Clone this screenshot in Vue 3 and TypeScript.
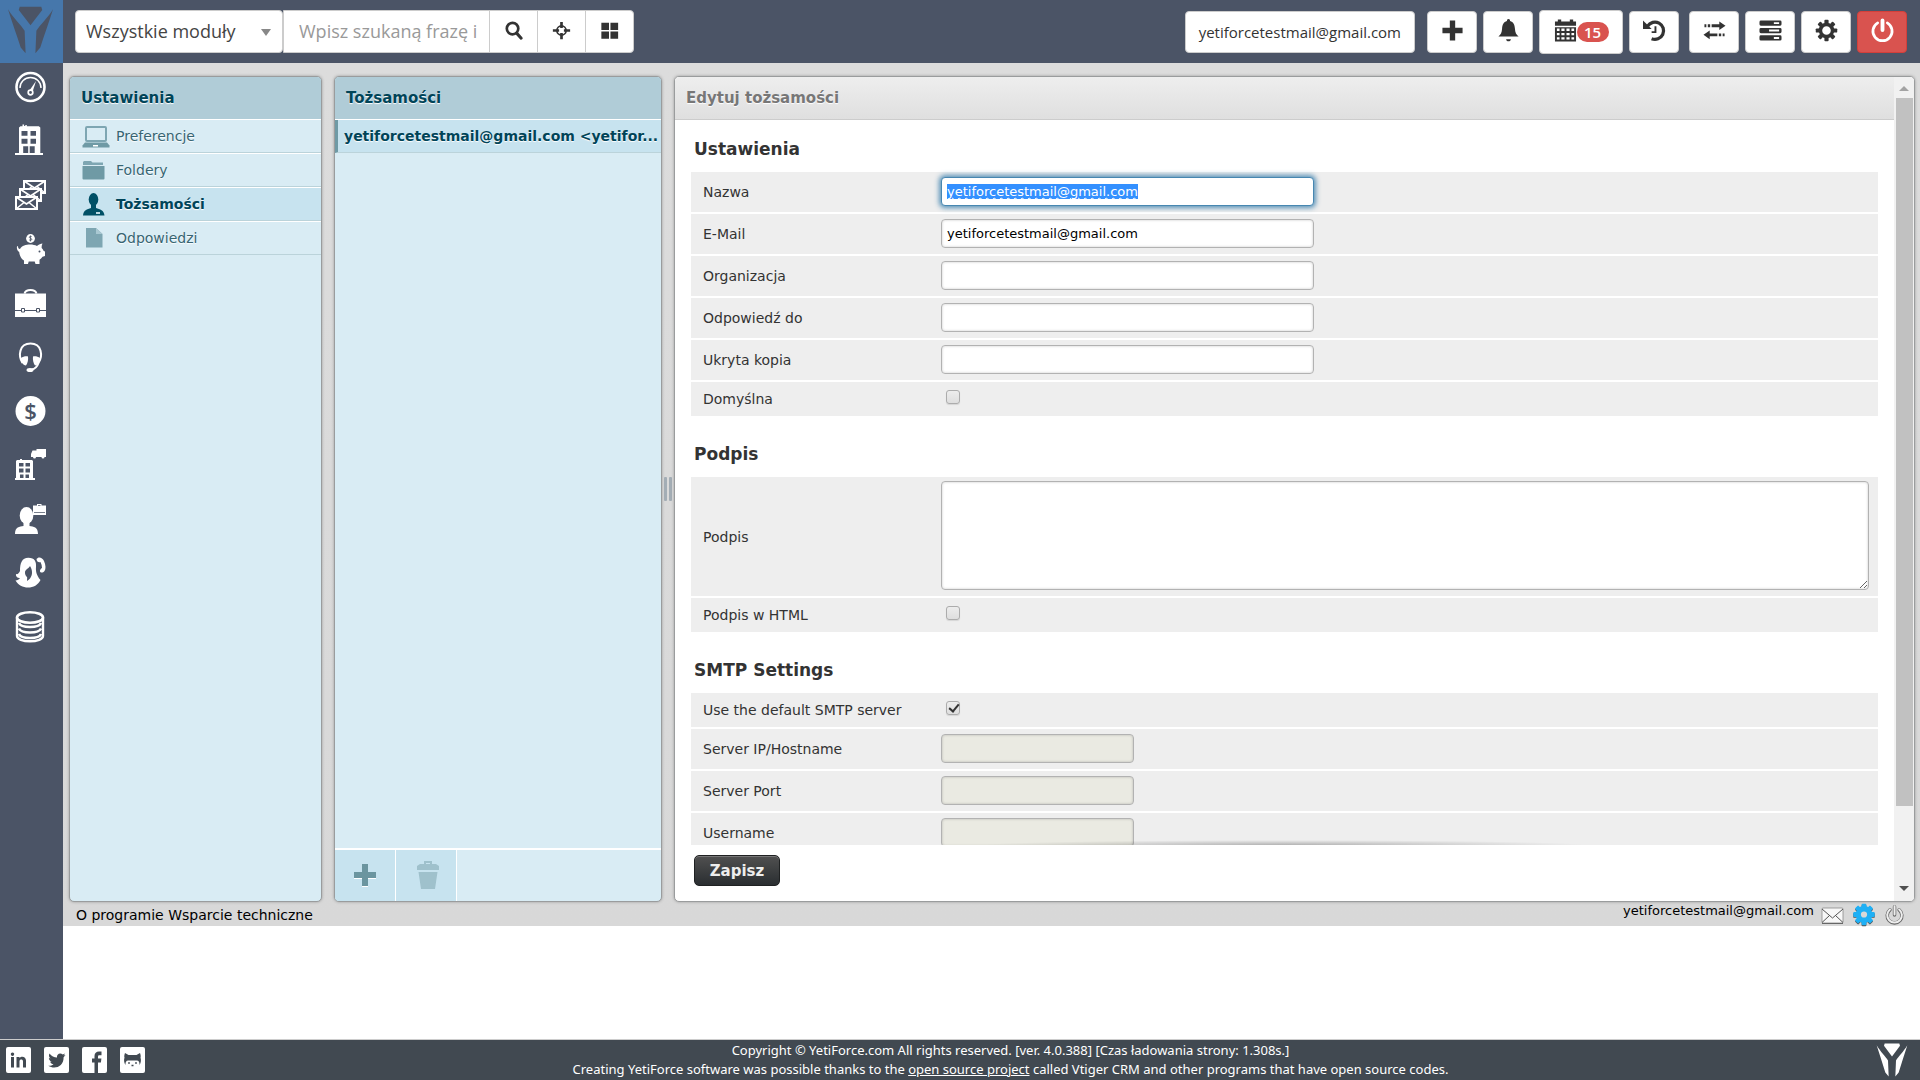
<script setup lang="ts">
import { nextTick, onMounted, ref } from 'vue'

interface Item {
  label: string
  icon: string
}

interface Field {
  id: string
  label: string
  kind: 'text' | 'checkbox' | 'textarea'
  value?: string
  checked?: boolean
  disabled?: boolean
}

interface Section {
  title: string
  fields: Field[]
}

const envelope = (x: number, y: number): string =>
  `<g transform="translate(${x} ${y})"><rect x="1" y="1" width="21" height="12" fill="#4b5466" stroke="#fff" stroke-width="2"/><path d="M1 1l10.500 7L22 1M1 13l8-6.500M22 13l-8-6.500" fill="none" stroke="#fff" stroke-width="1.600"/></g>`

const teeth = (count: number, x: number, y: number, w: number, h: number): string =>
  Array.from({ length: count }, (_, i) => `<rect x="${x}" y="${y}" width="${w}" height="${h}" rx="1" transform="rotate(${(i * 360) / count} 12 12)"/>`).join('')

const icons: Record<string, string> = {
  gauge:
    '<circle cx="15.500" cy="16" r="14" fill="none" stroke="#fff" stroke-width="2.600"/><path d="M5 17a10.500 10.500 0 0 1 21 0" fill="none" stroke="#fff" stroke-width="1.400"/><path d="M14.500 19.500L21 10l-3.500 11z"/><circle cx="15.500" cy="21.500" r="2.300" fill="#4b5466" stroke="#fff" stroke-width="1.700"/>',
  building:
    '<path fill-rule="evenodd" d="M4 2.500l1.500-1.300h2V-.5h1.600v1.500h1.200V0h1.500v1.200h12L25.300 2.500V28H28v2H0v-2h4zM6.500 6v4.700h6V6zm9 0v4.700h5.500V6zm-9 7.700v5h6v-5zm9 0v5h5.500v-5zm-7.300 7.600V28h5v-6.700zm6.500 0V28h5v-6.700z"/>',
  mails: envelope(8, 1) + envelope(4, 9) + envelope(0, 17),
  piggy:
    '<circle cx="15.500" cy="5.500" r="4.400"/><path d="M16.700 3.700c-.8-.7-2.400-.5-2.400.6 0 1.200 2.500.8 2.500 2 0 1.200-1.700 1.300-2.700.5M15.500 2.600v5.800" fill="none" stroke="#4b5466" stroke-width=".8"/><path d="M3 13c0 2 .5 3 2 3 2-3.500 6-4.500 10-4.500 3 0 5 .5 7 1.500 1.500-1.500 4-2.500 5.500-2.500-.8 1.500-1 3-.8 4.500 1 1 1.600 2 2 3l1.300.5v4.500l-2.500.8c-.8 1.300-2 2.300-3 3V31h-4l-.8-2.500h-6L13 31H9v-3.500C6.500 26 4.500 23 4.200 19 2.500 18 1.500 16 2 13.500z"/><circle cx="24.500" cy="18.500" r="1" fill="#4b5466"/>',
  briefcase:
    '<path d="M9.500 6.500C10.500 3.500 12 3 15.500 3s5 .5 6 3.500" fill="none" stroke="#fff" stroke-width="2"/><path d="M0 6.500h31V30H0z"/><path d="M0 23.500h31" stroke="#4b5466" stroke-width="1"/><path d="M6.500 21.500h3V25h-3zM21.500 21.500h3V25h-3z" fill="#fff" stroke="#4b5466" stroke-width="1"/>',
  headset:
    '<path d="M7.500 22C3 15 4 2.500 15.500 2.500S28 15 23.500 22c-1 3-3 6-7 6.500" fill="none" stroke="#fff" stroke-width="2"/><path d="M6 17c2-1.500 5-2 7-1.500.5 3-.5 7-2 9-3-.5-5.500-3.500-5-7.500zM25 17c-2-1.500-5-2-7-1.500-.5 3 .5 7 2 9 3-.5 5.500-3.500 5-7.500z"/><ellipse cx="15" cy="29" rx="3.500" ry="2"/>',
  dollar:
    '<circle cx="15.500" cy="16" r="15"/><text x="15.500" y="24" text-anchor="middle" font-family="Open Sans, sans-serif" font-weight="600" font-size="22" fill="#4b5466">$</text>',
  office:
    '<path fill-rule="evenodd" d="M1 12l1-1h3v-1h2v1h10l1 1v17h2v2H0v-2h1zM4 14v3.500h4.500V14zm6.500 0v3.500H15V14zM4 19.500v4h4.500v-4zm6.500 0v4H15v-4zM5 25.500V29h3.500v-3.500zm5.500 0V29H14v-3.500z"/><path d="M21.500 0H31v8h-1.500a1.500 1.500 0 0 1-3 0H21a1.500 1.500 0 0 1-3 0h-2V5l1.500-3.500h4z"/>',
  agent:
    '<ellipse cx="11.500" cy="12.500" rx="6.800" ry="8.500"/><path d="M8.500 19h6v4c4 .5 8.500 1 8.500 8H0c0-7 4.500-7.500 8.500-8z"/><path fill-rule="evenodd" d="M22 1h4.500v1.500h4.500V12H18V2.500h4zM23 2v.8h2.500V2zM19 9v.7h11V9z"/>',
  caller:
    '<path fill-rule="evenodd" d="M13.300.7C20 .7 21.500 5 21 10c-.3 3.500 0 8 4.500 13-2.500 5-7 7.500-12.500 7.500C8 30.500 3 28 .5 23.500c2 0 3.500-1 4.500-2.500-2.500 0-4.500-1.500-4-4 1.500.5 3-.5 4-3C5 6 7 .7 13.300.7zM15 9c-1 2.500-4.500 3-5 6-.2 2.500 1 4 2.200 5.500L12 24l2-1.500c3-2.500 4.500-8 1-13.500z"/><path d="M21.500 2c2-3 6-1.500 7.500 2 1.800 4 2 8 .5 10-1.500 2-4 2-4.500.5-.4-1.500 1-3 2-3.500 0-2-.5-4-1.500-6-1.500 1-4-.5-4-3z"/>',
  database:
    '<ellipse cx="15" cy="6.500" rx="13" ry="5.300" fill="none" stroke="#fff" stroke-width="2.600"/><path d="M2 6.500v18.500c0 3 6 5.300 13 5.300S28 28 28 25V6.500M4 12c1 2.500 6 4 11 4s10-1.500 11-4M4 17.500c1 2.500 6 4 11 4s10-1.500 11-4M4 23c1 2.500 6 4 11 4s10-1.500 11-4" fill="none" stroke="#fff" stroke-width="2.400"/>',
  search: '<circle cx="11" cy="10" r="6" fill="none" stroke="#333" stroke-width="2.800"/><path d="M15.500 15l4.500 5" stroke="#333" stroke-width="3.200" stroke-linecap="round"/>',
  target:
    '<circle cx="12" cy="12" r="4.800" fill="none" stroke="#333" stroke-width="1.800"/><path d="M12 3v6.500M12 14.500v6.500M3 12h6.500M14.500 12h6.500" stroke="#333" stroke-width="2.800"/>',
  grid: '<path d="M3.500 4h8v7.500h-8zM13 4h8v7.500h-8zM3.500 13h8v7.500h-8zM13 13h8v7.500h-8z"/>',
  plus: '<path d="M9.200 1.500h5.600v7.700h7.700v5.600h-7.700v7.700H9.200v-7.700H1.500V9.200h7.700z"/>',
  bell: '<path d="M12 0c1.200 0 1.700.8 1.600 2 3.500 1 4.900 4 5.100 8 .2 4.500 1.500 6.500 3.800 8.300H1.500C3.800 16.500 5.100 14.500 5.300 10c.2-4 1.600-7 5.100-8C10.300.8 10.800 0 12 0zM9.500 21h5c0 1.300-1 2.300-2.500 2.300S9.500 22.300 9.500 21z"/>',
  calendar:
    '<path d="M1 2.500h3V.5h3.500v2h9v-2H20v2h3V7H1z"/><path fill-rule="evenodd" d="M1 8.500h22v15H1zM3 10v2.500h2.800V10zm4.700 0v2.500h3.300V10zm5.300 0v2.500h3.300V10zm5.200 0v2.500H21V10zM3 14.500V17h2.800v-2.500zm4.700 0V17h3.300v-2.500zm5.300 0V17h3.300v-2.500zm5.200 0V17H21v-2.500zM3 19v2.500h2.800V19zm4.700 0v2.500h3.300V19zm5.300 0v2.500h3.300V19zm5.200 0v2.500H21V19z"/>',
  history:
    '<path d="M4.800 7.500A9 9 0 1 1 9 20.500" fill="none" stroke="#333" stroke-width="3.400"/><path d="M0 1.500V10.500h9z"/><path d="M13 7.500v6.200h-4" fill="none" stroke="#333" stroke-width="2"/>',
  transfer:
    '<path d="M9 5.500h8V2.500l6.500 4.500L17 11.500V8.500H9zM1.500 5.500h2v3h-2zM5 5.500h2.500v3H5zM15 15H7v-3L.5 16.500 7 21v-3h8zM16.500 15H19v3h-2.500zM20.500 15h2v3h-2z"/>',
  server:
    '<path fill-rule="evenodd" d="M2 1.500h20a1.500 1.500 0 0 1 1.500 1.500v2.500A1.500 1.500 0 0 1 22 7H2A1.500 1.500 0 0 1 .5 5.500V3A1.500 1.500 0 0 1 2 1.500zM15.500 3.300v2H21v-2zM2 9.300h20a1.500 1.500 0 0 1 1.500 1.500v2.500a1.500 1.500 0 0 1-1.500 1.500H2a1.500 1.500 0 0 1-1.500-1.500v-2.500A1.500 1.500 0 0 1 2 9.300zM10.500 11v2H21v-2zM2 17h20a1.500 1.500 0 0 1 1.500 1.500V21a1.500 1.500 0 0 1-1.500 1.500H2A1.500 1.500 0 0 1 .5 21v-2.500A1.500 1.500 0 0 1 2 17zM15.500 18.800v2H21v-2z"/>',
  gear: `<circle cx="12" cy="12" r="6.300" fill="none" stroke="#333" stroke-width="3.600"/>${teeth(8, 9.8, 0.8, 4.4, 4.4)}`,
  power:
    '<path d="M7 4a10 10 0 1 0 10 0" fill="none" stroke="#fff" stroke-width="2.800" stroke-linecap="round"/><path d="M12 1.500v10" stroke="#fff" stroke-width="4" stroke-linecap="round"/>',
  laptop:
    '<rect x="4" y="3" width="20" height="14" rx="1" fill="none" stroke="#7ea6b2" stroke-width="2"/><path d="M3 18.500h22l2.500 3v2H.5v-2z" fill="#6f9aa5"/><path d="M11 21h5v1.500h-5z" fill="#fff"/>',
  folder: '<path d="M2 3h7l1.500 1.500H21V7H1V4z" fill="#7ea6b2"/><path d="M.5 8h22v12.500a1 1 0 0 1-1 1h-20a1 1 0 0 1-1-1z" fill="#6f9aa5"/>',
  person: '<ellipse cx="11.500" cy="7.500" rx="4.800" ry="6.500" fill="#005066"/><path d="M9 12h5v4c4 1.500 8 2 8.500 7.500H1C1.500 18 5 17.500 9 16z" fill="#005066"/><path d="M14 20h4v2h-4z" fill="#b9d8e2"/>',
  page: '<path d="M4 2h10l6.500 6v13.500H4z" fill="#7ea6b2"/><path d="M14 2v6h6.500z" fill="#a9c8d2"/>',
  add: '<path d="M9 2h6v8h8v6h-8v8H9v-8H1v-6h8z" fill="#fff" transform="translate(0 1)"/><path d="M9 2h6v8h8v6h-8v8H9v-8H1v-6h8z" fill="#6b959f"/>',
  trash:
    '<g fill="#9fc1cc"><path d="M9 3V0h6v3" fill="none" stroke="#9fc1cc" stroke-width="2"/><path d="M1 4l3-2h16l3 2v4H1zM2.500 10h19L19 27H5z"/></g>',
  mailbox:
    '<rect x="1" y="2" width="21" height="15" rx="1" fill="#f7f7f7" stroke="#8a8a8a" stroke-width=".8"/><path d="M1 3l10.500 9L22 3M1 16.500l7.500-7M22 16.500l-7.500-7" fill="none" stroke="#555" stroke-width="1"/><path d="M1 17.500h21" stroke="#666" stroke-width="1"/>',
  blueGear: `<g fill="#555" transform="translate(0 1)">${teeth(8, 9.5, 0.8, 5, 5)}</g><g fill="#1fb0f5"><circle cx="12" cy="12" r="6" fill="none" stroke="#1fb0f5" stroke-width="5.500"/>${teeth(8, 9.5, 0.8, 5, 5)}</g>`,
  logout:
    '<g fill="none" stroke-linecap="round"><path d="M6.500 6.500a8 8 0 1 0 10 0M11.500 3v9" stroke="#666" stroke-width="3.800"/><path d="M6.500 6a8 8 0 1 0 10 0M11.500 2.500v9" stroke="#eee" stroke-width="2.200"/></g>',
  linkedin:
    '<path fill-rule="evenodd" d="M2 0h21a2 2 0 0 1 2 2v22a2 2 0 0 1-2 2H2a2 2 0 0 1-2-2V2a2 2 0 0 1 2-2zM5 10v10.500h3V10zM6.500 5.500a1.700 1.700 0 1 0 .01 0zM10.500 10v10.500h3V14c.5-2 3.500-2 3.500.5v6h3v-7c0-4-4.500-5-6.500-2.500V10z"/>',
  twitter:
    '<rect width="25" height="26" rx="2"/><path d="M21.500 8l-2 .6c.8-.5 1.300-1.200 1.500-2l-2.200.9c-2.500-2.500-6.500-.5-5.800 3-3 0-5.500-1.300-7.500-4-1 2-.5 3.800 1 5l-1.600-.5c0 1.800 1.200 3.200 2.900 3.700h-1.600c.5 1.400 1.700 2.300 3.300 2.500-1.500 1.200-3.300 1.700-5.200 1.500 6 4 15.500 1.300 15.300-8.500z" fill="#414951"/>',
  facebook: '<rect width="25" height="26" rx="2"/><path d="M12.500 26V15.500H10V11.500h2.500V9c0-3 1.800-4.500 4.500-4.500h2.500v3.800h-2c-1 0-1.500.4-1.500 1.400v1.800h3.400l-.5 4H16V26z" fill="#414951"/>',
  github:
    '<rect width="25" height="26" rx="2"/><path d="M5 6l3.500 2h8L20 6c.8 2 .9 3.500.5 4.500.8 2.500.5 5-1 7.500.2-3.500-1-5-3.500-4.500h-7C6.500 13 5.300 14.500 5.500 18c-1.500-2.500-1.800-5-1-7.500C4.100 9.500 4.200 8 5 6z" fill="#414951"/><path d="M9 15v2M16 15v2M11.500 18.500h2" stroke="#414951" stroke-width="1.300"/>',
}

const modules: Item[] = [
  { label: 'Pulpit', icon: 'gauge' },
  { label: 'Kontrahenci', icon: 'building' },
  { label: 'Poczta', icon: 'mails' },
  { label: 'Finanse', icon: 'piggy' },
  { label: 'Projekty', icon: 'briefcase' },
  { label: 'Wsparcie', icon: 'headset' },
  { label: 'Sprzedaż', icon: 'dollar' },
  { label: 'Dostawy', icon: 'office' },
  { label: 'Kadry', icon: 'agent' },
  { label: 'Kontakty', icon: 'caller' },
  { label: 'Baza danych', icon: 'database' },
]

const searchTools: Item[] = [
  { label: 'Szukaj', icon: 'search' },
  { label: 'Wyszukiwanie zaawansowane', icon: 'target' },
  { label: 'Moduły', icon: 'grid' },
]

const settings: Item[] = [
  { label: 'Preferencje', icon: 'laptop' },
  { label: 'Foldery', icon: 'folder' },
  { label: 'Tożsamości', icon: 'person' },
  { label: 'Odpowiedzi', icon: 'page' },
]

const socials: Item[] = [
  { label: 'LinkedIn', icon: 'linkedin' },
  { label: 'Twitter', icon: 'twitter' },
  { label: 'Facebook', icon: 'facebook' },
  { label: 'GitHub', icon: 'github' },
]

const account = 'yetiforcetestmail@gmail.com'
const identity = `${account} <yetifor...`

const sections = ref<Section[]>([
  {
    title: 'Ustawienia',
    fields: [
      { id: 'name', label: 'Nazwa', kind: 'text', value: account },
      { id: 'email', label: 'E-Mail', kind: 'text', value: account },
      { id: 'organization', label: 'Organizacja', kind: 'text', value: '' },
      { id: 'reply-to', label: 'Odpowiedź do', kind: 'text', value: '' },
      { id: 'bcc', label: 'Ukryta kopia', kind: 'text', value: '' },
      { id: 'standard', label: 'Domyślna', kind: 'checkbox', checked: false },
    ],
  },
  {
    title: 'Podpis',
    fields: [
      { id: 'signature', label: 'Podpis', kind: 'textarea', value: '' },
      { id: 'html-signature', label: 'Podpis w HTML', kind: 'checkbox', checked: false },
    ],
  },
  {
    title: 'SMTP Settings',
    fields: [
      { id: 'smtp-default', label: 'Use the default SMTP server', kind: 'checkbox', checked: true },
      { id: 'smtp-host', label: 'Server IP/Hostname', kind: 'text', value: '', disabled: true },
      { id: 'smtp-port', label: 'Server Port', kind: 'text', value: '', disabled: true },
      { id: 'smtp-user', label: 'Username', kind: 'text', value: '', disabled: true },
    ],
  },
])

onMounted(async () => {
  await nextTick()
  const input = document.getElementById('name') as HTMLInputElement | null
  input?.focus()
  input?.select()
})
</script>

<template>
  <div class="app">
    <header class="topbar">
      <a class="brand" href="#" aria-label="YetiForce">
        <svg viewBox="0 0 48 60" width="47" height="48" preserveAspectRatio="none">
          <path d="M13 1h22l1 4-12 19L12 5zM1 4c6 12 13 19 17 27l1 28-5-7C10 36 5 20 1 4zM47 4c-6 12-13 19-17 27l-1 28 5-7c4-16 9-32 13-48z" fill="#4b5466" />
        </svg>
      </a>
      <div class="search">
        <div class="module-select">
          <select aria-label="Moduł">
            <option>Wszystkie moduły</option>
          </select>
        </div>
        <div class="search-group">
          <input type="text" placeholder="Wpisz szukaną frazę i" aria-label="Szukana fraza" />
          <button v-for="tool in searchTools" :key="tool.icon" type="button" :aria-label="tool.label">
            <svg viewBox="0 0 24 24" width="23" height="23" fill="#333" v-html="icons[tool.icon]" />
          </button>
        </div>
      </div>
      <div class="actions">
        <button type="button" class="account">{{ account }}</button>
        <button type="button" class="tool" aria-label="Dodaj"><svg viewBox="0 0 24 24" v-html="icons.plus" /></button>
        <button type="button" class="tool" aria-label="Powiadomienia"><svg viewBox="0 0 24 24" v-html="icons.bell" /></button>
        <button type="button" class="tool wide" aria-label="Kalendarz">
          <svg viewBox="0 0 24 24" v-html="icons.calendar" /><span class="badge">15</span>
        </button>
        <button type="button" class="tool" aria-label="Historia"><svg viewBox="0 0 24 24" v-html="icons.history" /></button>
        <button type="button" class="tool spaced" aria-label="Przełącz"><svg viewBox="0 0 24 24" v-html="icons.transfer" /></button>
        <button type="button" class="tool" aria-label="Serwer"><svg viewBox="0 0 24 24" v-html="icons.server" /></button>
        <button type="button" class="tool" aria-label="Ustawienia"><svg viewBox="0 0 24 24" v-html="icons.gear" /></button>
        <button type="button" class="tool danger" aria-label="Wyloguj"><svg viewBox="0 0 24 24" v-html="icons.power" /></button>
      </div>
    </header>

    <div class="middle">
      <nav class="sidebar">
        <a v-for="entry in modules" :key="entry.icon" href="#" :aria-label="entry.label">
          <svg viewBox="0 0 32 32" width="32" height="32" fill="#fff" v-html="icons[entry.icon]" />
        </a>
      </nav>

      <main class="mail">
        <div class="panels">
          <section class="panel settings">
            <h2>Ustawienia</h2>
            <a
              v-for="entry in settings"
              :key="entry.icon"
              href="#"
              class="row"
              :class="{ selected: entry.label === 'Tożsamości' }"
            >
              <svg viewBox="0 0 28 25" width="28" height="25" v-html="icons[entry.icon]" />
              <span>{{ entry.label }}</span>
            </a>
          </section>

          <section class="panel identities">
            <h2>Tożsamości</h2>
            <a href="#" class="row selected identity">{{ identity }}</a>
            <div class="panel-tools">
              <button type="button" aria-label="Dodaj tożsamość"><svg viewBox="0 0 24 28" width="24" height="28" v-html="icons.add" /></button>
              <button type="button" aria-label="Usuń tożsamość" disabled><svg viewBox="0 -1 24 30" width="24" height="30" v-html="icons.trash" /></button>
            </div>
          </section>

          <div class="splitter"><i></i><i></i></div>

          <section class="panel editor">
            <div class="editor-main">
              <h2>Edytuj tożsamości</h2>
              <form class="form" @submit.prevent>
                <fieldset v-for="section in sections" :key="section.title">
                  <legend>{{ section.title }}</legend>
                  <div v-for="field in section.fields" :key="field.id" class="field" :class="field.kind">
                    <label :for="field.id">{{ field.label }}</label>
                    <textarea v-if="field.kind === 'textarea'" :id="field.id" v-model="field.value"></textarea>
                    <input v-else-if="field.kind === 'checkbox'" :id="field.id" v-model="field.checked" type="checkbox" />
                    <input v-else :id="field.id" v-model="field.value" type="text" :disabled="field.disabled" />
                  </div>
                </fieldset>
              </form>
              <div class="form-actions"><button type="submit">Zapisz</button></div>
            </div>
            <div class="scrollbar" aria-hidden="true">
              <span class="arrow up"></span>
              <span class="thumb"></span>
              <span class="arrow down"></span>
            </div>
          </section>
        </div>

        <div class="status">
          <div class="status-links"><a href="#">O programie</a> <a href="#">Wsparcie techniczne</a></div>
          <div class="status-user">
            <span>{{ account }}</span>
            <a href="#" aria-label="Poczta"><svg viewBox="0 0 24 20" width="24" height="20" v-html="icons.mailbox" /></a>
            <a href="#" aria-label="Ustawienia"><svg viewBox="0 0 24 24" width="24" height="23" v-html="icons.blueGear" /></a>
            <a href="#" aria-label="Wyloguj"><svg viewBox="0 0 24 24" width="24" height="22" v-html="icons.logout" /></a>
          </div>
        </div>
      </main>
    </div>

    <footer class="footer">
      <div class="socials">
        <a v-for="entry in socials" :key="entry.icon" href="#" :aria-label="entry.label">
          <svg viewBox="0 0 25 26" width="25" height="26" fill="#fff" v-html="icons[entry.icon]" />
        </a>
      </div>
      <div class="copyright">
        <p>Copyright © YetiForce.com All rights reserved. [ver. 4.0.388] [Czas ładowania strony: 1.308s.]</p>
        <p>
          Creating YetiForce software was possible thanks to the <a href="#">open source project</a> called Vtiger CRM and other
          programs that have open source codes.
        </p>
      </div>
      <a class="footer-logo" href="#" aria-label="YetiForce">
        <svg viewBox="0 0 48 60" width="32" height="34" preserveAspectRatio="none">
          <path d="M13 1h22l1 4-12 19L12 5zM1 4c6 12 13 19 17 27l1 28-5-7C10 36 5 20 1 4zM47 4c-6 12-13 19-17 27l-1 28 5-7c4-16 9-32 13-48z" fill="#fff" />
        </svg>
      </a>
    </footer>
  </div>
</template>

<style>
body {
  margin: 0;
  background: #fff;
}
</style>

<style scoped>
.app,
.app * {
  box-sizing: border-box;
}

.app {
  display: flex;
  flex-direction: column;
  height: 100vh;
  overflow: hidden;
  font-family: 'Open Sans', sans-serif;
  color: #333;
}

button,
input,
select,
textarea {
  font: inherit;
  margin: 0;
}

svg {
  display: block;
  flex: none;
  overflow: visible;
}

h2,
p {
  margin: 0;
}

/* top bar */
.topbar {
  display: flex;
  align-items: center;
  flex: none;
  height: 63px;
  background: #4b5466;
}

.brand {
  display: flex;
  align-items: center;
  justify-content: center;
  width: 63px;
  height: 63px;
  padding: 0 2px 3px 0;
  background: #4677ab;
}

.search {
  display: flex;
  margin-left: 12px;
  height: 43px;
  font-size: 18px;
}

.module-select {
  position: relative;
  width: 208px;
}

.module-select::after {
  content: '';
  position: absolute;
  top: 19px;
  right: 12px;
  border: 5px solid transparent;
  border-top: 7px solid #888;
  border-bottom: 0;
  pointer-events: none;
}

.module-select select {
  appearance: none;
  width: 100%;
  height: 100%;
  padding: 0 0 2px 10px;
  border: 1px solid #ccc;
  border-radius: 4px;
  background: #fff;
  color: #444;
}

.search-group {
  display: flex;
  overflow: hidden;
  border: 1px solid #ccc;
  border-radius: 0 4px 4px 0;
  background: #fff;
}

.search-group input {
  width: 205px;
  padding: 0 4px 2px 15px;
  border: 0;
  background: none;
}

.search-group input::placeholder {
  color: #999;
}

.search-group button {
  display: flex;
  align-items: center;
  justify-content: center;
  width: 48px;
  padding: 0 0 2px;
  border: 0;
  border-left: 1px solid #ccc;
  background: none;
}

.actions {
  display: flex;
  align-items: center;
  gap: 6px;
  margin-left: auto;
  padding-right: 13px;
}

.account,
.tool {
  height: 42px;
  border: 1px solid #ccc;
  border-radius: 4px;
  background: #fff;
  color: #333;
}

.account {
  margin-right: 6px;
  padding: 0 13px;
  font-size: 15px;
}

.tool {
  display: flex;
  align-items: center;
  justify-content: center;
  width: 50px;
  padding: 0 0 3px;
}

.tool svg {
  width: 23px;
  height: 23px;
  fill: #333;
}

.tool.wide {
  width: 84px;
  height: 44px;
}

.tool.spaced {
  margin-left: 4px;
}

.tool.danger {
  border-color: #d43f3a;
  background: #d9534f;
}

.badge {
  width: 32px;
  height: 20px;
  margin-top: 3px;
  border-radius: 10px;
  background: #d9534f;
  color: #fff;
  font-size: 15px;
  font-weight: 600;
  line-height: 20px;
  text-align: center;
}

/* side navigation */
.middle {
  display: flex;
  flex: 1;
  min-height: 0;
}

.sidebar {
  display: flex;
  flex: none;
  flex-direction: column;
  align-items: center;
  gap: 22px;
  width: 63px;
  padding: 8px 2px 0 0;
  background: #4b5466;
}

/* mail frame */
.mail {
  display: flex;
  flex: 1;
  flex-direction: column;
  min-width: 0;
  margin-bottom: 113px;
  padding: 13px 5px 0 6px;
  background: linear-gradient(#dcdcdc, #d8d8d8);
  font-family: Verdana, 'DejaVu Sans', sans-serif;
  font-size: 14px;
}

.panels {
  display: flex;
  flex: 1;
  min-height: 0;
}

.panel {
  display: flex;
  flex-direction: column;
  overflow: hidden;
  border: 1px solid #9a9c9d;
  border-radius: 5px;
  background: #d9ecf4;
  box-shadow: 0 0 3px #999;
}

.settings {
  flex: none;
  width: 253px;
  margin-right: 12px;
}

.identities {
  flex: none;
  width: 328px;
}

.panel h2 {
  flex: none;
  height: 43px;
  padding-left: 11px;
  border-bottom: 1px solid #fff;
  background: #b0ccd7;
  color: #004458;
  font-size: 15px;
  font-weight: bold;
  line-height: 43px;
  text-shadow: 0 1px 1px #fff;
}

.row {
  display: flex;
  align-items: center;
  flex: none;
  gap: 6px;
  height: 34px;
  padding-left: 12px;
  border-top: 1px solid #fff;
  border-bottom: 1px solid #bbd3da;
  color: #376572;
  text-decoration: none;
  text-shadow: 0 1px 1px #fff;
}

h2 + .row {
  height: 33px;
  border-top: 0;
}

.row.selected {
  background: #c7e3ef;
  color: #004458;
  font-weight: bold;
}

.row.identity {
  padding: 0 0 0 6px;
  border-left: 3px solid #6f9aa5;
  white-space: nowrap;
}

.panel-tools {
  display: flex;
  height: 53px;
  margin-top: auto;
  border-top: 2px solid #fff;
}

.panel-tools button {
  display: flex;
  align-items: center;
  justify-content: center;
  width: 61px;
  padding: 0;
  border: 0;
  border-right: 1px solid #fff;
  background: #c7e3ef;
}

.panel-tools button + button {
  padding-left: 3px;
}

.splitter {
  display: flex;
  align-items: center;
  justify-content: center;
  gap: 2px;
  width: 12px;
}

.splitter i {
  width: 3px;
  height: 24px;
  border-radius: 1px;
  background: #a3adb5;
}

/* identity editor */
.panel.editor {
  flex: 1;
  flex-direction: row;
  min-width: 0;
  background: #fff;
}

.editor-main {
  display: flex;
  flex: 1;
  flex-direction: column;
  min-width: 0;
}

.editor h2 {
  border-color: #ccc;
  background: linear-gradient(#eee, #dfdfdf);
  color: #777;
}

.form {
  position: relative;
  flex: 1;
  min-height: 0;
  overflow: hidden;
  padding: 10px 16px 0;
}

.form::after {
  content: '';
  position: absolute;
  right: 25%;
  bottom: 0;
  left: 25%;
  height: 5px;
  background: radial-gradient(ellipse at bottom, rgba(0, 0, 0, 0.25), transparent 70%);
}

fieldset {
  display: flex;
  flex-direction: column;
  gap: 2px;
  min-width: 0;
  margin: 0 0 19px;
  padding: 0;
  border: 0;
}

legend {
  height: 42px;
  padding: 0 3px;
  color: #333;
  font-size: 17px;
  font-weight: bold;
  line-height: 38px;
}

.field {
  display: flex;
  align-items: center;
  height: 40px;
  padding: 0 9px 0 12px;
  background: #eee;
}

.field.checkbox {
  height: 34px;
}

.field.textarea {
  height: 119px;
}

.field label {
  flex: none;
  width: 238px;
  color: #333;
}

.field input[type='text'],
.field textarea {
  margin-bottom: 2px;
  border: 1px solid #b2b2b2;
  border-radius: 4px;
  background: #fff;
  box-shadow: inset 0 0 2px 1px rgba(0, 0, 0, 0.1);
  color: #000;
  outline: 0;
}

.field input[type='text'] {
  width: 373px;
  height: 29px;
  padding: 0 5px;
  font-size: 13px;
}

.field input[type='text']:focus {
  border-color: #4787b1;
  box-shadow: 0 0 5px 2px rgba(71, 135, 177, 0.9);
  text-decoration: underline wavy #e02020 1px;
}

.field input::selection {
  background: #3390ff;
  color: #fff;
}

.field input[type='text']:disabled {
  width: 193px;
  background: #eaeae2;
}

.field textarea {
  flex: 1;
  height: 109px;
}

.field input[type='checkbox'] {
  appearance: none;
  display: flex;
  width: 14px;
  height: 14px;
  margin: 0 5px 4px;
  border: 1px solid #acacac;
  border-radius: 3px;
  background: linear-gradient(#ededed, #dedede);
  box-shadow: 0 1px 1px rgba(0, 0, 0, 0.1);
}

.field input[type='checkbox']:checked::after {
  content: '';
  width: 4px;
  height: 8px;
  margin: 0 0 0 4px;
  border: solid #333;
  border-width: 0 2px 2px 0;
  transform: rotate(40deg);
}

.form-actions {
  flex: none;
  height: 56px;
  padding: 10px 19px 0;
}

.form-actions button {
  width: 86px;
  height: 31px;
  padding: 0;
  border: 1px solid #1f2122;
  border-radius: 5px;
  background: linear-gradient(#505050, #2a2e31);
  box-shadow: inset 0 1px 0 #777;
  color: #ededed;
  font-size: 15px;
  font-weight: bold;
}

.scrollbar {
  display: flex;
  flex: none;
  flex-direction: column;
  align-items: center;
  width: 20px;
  padding: 9px 0 10px;
  background: #f1f1f1;
}

.thumb {
  width: 17px;
  height: 88%;
  margin: 7px 0 auto;
  background: #c1c1c1;
}

.arrow {
  border: 5px solid transparent;
}

.arrow.up {
  border-top: 0;
  border-bottom-color: #a3a3a3;
}

.arrow.down {
  border-top-color: #505050;
  border-bottom: 0;
}

.status {
  display: flex;
  flex: none;
  justify-content: space-between;
  height: 24px;
  padding: 0 8px 0 7px;
  color: #000;
}

.status a {
  color: inherit;
  text-decoration: none;
}

.status-links {
  line-height: 26px;
}

.status-user {
  display: flex;
  align-items: flex-end;
  gap: 7px;
}

.status-user span {
  align-self: flex-start;
  font-size: 13px;
  line-height: 18px;
}

/* footer */
.footer {
  display: flex;
  align-items: center;
  flex: none;
  height: 41px;
  padding: 0 12px 0 6px;
  border-top: 1px solid #ccc;
  background: #414951;
  color: #fff;
}

.socials {
  display: flex;
  gap: 13px;
}

.copyright {
  flex: 1;
  font-family: 'Noto Sans', 'Open Sans', sans-serif;
  font-size: 13px;
  line-height: 19px;
  text-align: center;
}

.copyright a {
  color: inherit;
}
</style>
